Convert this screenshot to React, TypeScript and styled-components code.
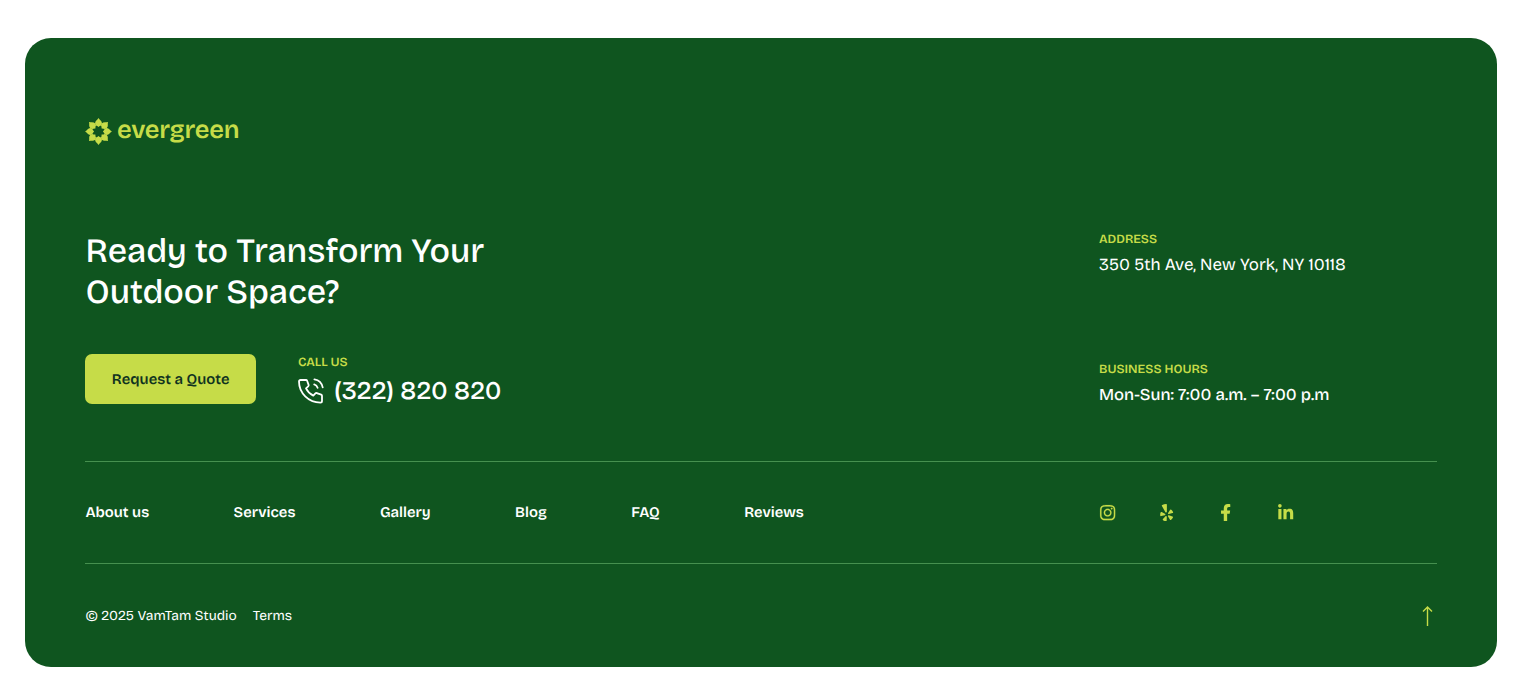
import React from "react";
import styled, { createGlobalStyle } from "styled-components";
import { FaFacebookF, FaInstagram, FaLinkedinIn, FaYelp } from "react-icons/fa";

const lime = "#c6dc48";
const forest = "#0f551f";
const rule = "#46904f";

const GlobalStyle = createGlobalStyle`
  * { box-sizing: border-box; }
  body {
    margin: 0;
    background: #fff;
    font-family: "Bricolage Grotesque", Inter, "Liberation Sans", sans-serif;
    color: #fff;
    text-rendering: geometricPrecision;
  }
  a { color: inherit; text-decoration: none; }
`;

const Page = styled.div`
  height: 700px;
  padding: 38px 29px 33px 25px;
`;

const Card = styled.footer`
  height: 629px;
  padding: 80px 60px 0 60.4px;
  border-radius: 26px;
  background: ${forest};
`;

const Text = styled.span<{ $size: number; $weight?: number; $track?: number; $line?: number }>`
  display: block;
  white-space: nowrap;
  font-size: ${(p) => p.$size}px;
  font-weight: ${(p) => p.$weight ?? 400};
  letter-spacing: ${(p) => p.$track ?? 0}px;
  line-height: ${(p) => p.$line ?? 20}px;
`;

const Logo = styled.a`
  display: flex;
  align-items: center;
  gap: 4.6px;
  height: 27px;
  color: ${lime};
`;

const Wordmark = styled(Text)`
  padding-bottom: 3px;
`;

const Main = styled.section`
  display: grid;
  grid-template-columns: 1fr 338px;
  height: 231px;
  margin-top: 85px;
`;

const Heading = styled.h2`
  margin: 0;
  padding-top: 1px;
`;

const Actions = styled.div`
  display: flex;
  gap: 42px;
  margin-top: 41px;
`;

const Button = styled.a`
  display: flex;
  align-items: center;
  justify-content: center;
  width: 170.6px;
  height: 50px;
  border-radius: 7px;
  background: ${lime};
  color: #10331f;
`;

const Label = styled(Text)`
  color: ${lime};
`;

const Call = styled.div`
  padding-top: 1px;
`;

const Phone = styled.a`
  display: flex;
  align-items: center;
  gap: 10px;
  height: 34px;
  margin-top: 4px;
`;

const Info = styled.div`
  display: flex;
  flex-direction: column;
  gap: 78px;
`;

const Detail = styled.div`
  display: flex;
  flex-direction: column;
  gap: 5px;
  height: 52px;
`;

const NavRow = styled.section`
  display: grid;
  grid-template-columns: 1fr 338px;
  align-items: center;
  height: 103px;
  border-top: 1px solid ${rule};
  border-bottom: 1px solid ${rule};
`;

const Nav = styled.nav`
  display: flex;
  gap: 84.5px;
  padding-bottom: 2px;
`;

const Socials = styled.div`
  display: flex;
  gap: 41.2px;
  margin-left: -0.3px;
  color: ${lime};
`;

const Social = styled.a`
  display: flex;
  justify-content: center;
  width: 18px;
  font-size: 17.3px;
`;

const OutlinedInstagram = styled(FaInstagram)`
  stroke-width: 5;
`;

const Bottom = styled.div`
  display: flex;
  align-items: center;
  justify-content: space-between;
  height: 104px;
`;

const Legal = styled.div`
  display: flex;
  gap: 16px;
`;

const Top = styled.a`
  display: flex;
  margin-right: 4px;
`;

const Flower = () => (
  <svg width="27" height="27" viewBox="-13.5 -13.5 27 27" fill={lime}>
    {[0, 45, 90, 135, 180, 225, 270, 315].map((a) => (
      <path
        key={a}
        transform={`rotate(${a})`}
        d="M0 -4.4 Q-1.2 -5.7 -2.6 -6.1 Q-4.1 -8 -3.1 -9.8 Q-2.2 -11.2 -1.1 -12 L0 -13.4 L1.1 -12 Q2.2 -11.2 3.1 -9.8 Q4.1 -8 2.6 -6.1 Q1.2 -5.7 0 -4.4 Z"
      />
    ))}
  </svg>
);

const PhoneIcon = () => (
  <svg width="26" height="26" viewBox="0 0 26 26" fill="none" stroke="#fff" strokeWidth="1.8" strokeLinecap="round" strokeLinejoin="round">
    <path d="M2.6 2 H8 Q8.8 2 9.1 2.8 L10.6 6.9 Q10.9 7.7 10.2 8.3 L8 10.3 Q10.4 15.2 15.3 17.6 L17.4 15.4 Q18 14.8 18.8 15.1 L23.2 16.7 Q24 17 24 17.8 V23 Q24 24.6 22.4 24.6 C10.5 24.6 1 15 1 3.6 Q1 2 2.6 2 Z" />
    <path d="M16.2 6.4 Q18.8 7.1 19.6 9.8" />
    <path d="M16.4 1.4 Q23.3 2.6 24.7 9.4" />
  </svg>
);

const links = ["About us", "Services", "Gallery", "Blog", "FAQ", "Reviews"];

export default function App() {
  return (
    <Page>
      <GlobalStyle />
      <Card>
        <Logo href="#">
          <Flower />
          <Wordmark $size={25.5} $weight={600} $track={-0.3} $line={24}>evergreen</Wordmark>
        </Logo>
        <Main>
          <div>
            <Heading>
              <Text $size={34} $weight={500} $track={-0.13} $line={41}>Ready to Transform Your</Text>
              <Text $size={34} $weight={500} $track={-0.13} $line={41}>Outdoor Space?</Text>
            </Heading>
            <Actions>
              <Button href="#">
                <Text $size={14.8} $weight={600}>Request a Quote</Text>
              </Button>
              <Call>
                <Label $size={12.5} $weight={600} $line={15}>CALL US</Label>
                <Phone href="#">
                  <PhoneIcon />
                  <Text $size={25.5} $weight={500} $track={-0.1} $line={32}>(322) 820 820</Text>
                </Phone>
              </Call>
            </Actions>
          </div>
          <Info>
            <Detail>
              <Label $size={12.5} $weight={600} $line={19}>ADDRESS</Label>
              <Text $size={16.9} $line={22}>350 5th Ave, New York, NY 10118</Text>
            </Detail>
            <Detail>
              <Label $size={12.5} $weight={600} $line={19}>BUSINESS HOURS</Label>
              <Text $size={16.6} $weight={500} $line={24}>Mon-Sun: 7:00 a.m. – 7:00 p.m</Text>
            </Detail>
          </Info>
        </Main>
        <NavRow>
          <Nav>
            {links.map((name) => (
              <a href="#" key={name}>
                <Text $size={14.8} $weight={600}>{name}</Text>
              </a>
            ))}
          </Nav>
          <Socials>
            <Social href="#"><OutlinedInstagram /></Social>
            <Social href="#"><FaYelp /></Social>
            <Social href="#"><FaFacebookF /></Social>
            <Social href="#"><FaLinkedinIn /></Social>
          </Socials>
        </NavRow>
        <Bottom>
          <Legal>
            <Text $size={13.75}>© 2025 VamTam Studio</Text>
            <Text $size={13.75}>Terms</Text>
          </Legal>
          <Top href="#">
            <svg width="11" height="20" viewBox="0 0 11 20" fill="none" stroke={lime} strokeWidth="1.4">
              <path d="M5.5 20 V1.2 M1 5.5 L5.5 1 L10 5.5" />
            </svg>
          </Top>
        </Bottom>
      </Card>
    </Page>
  );
}
